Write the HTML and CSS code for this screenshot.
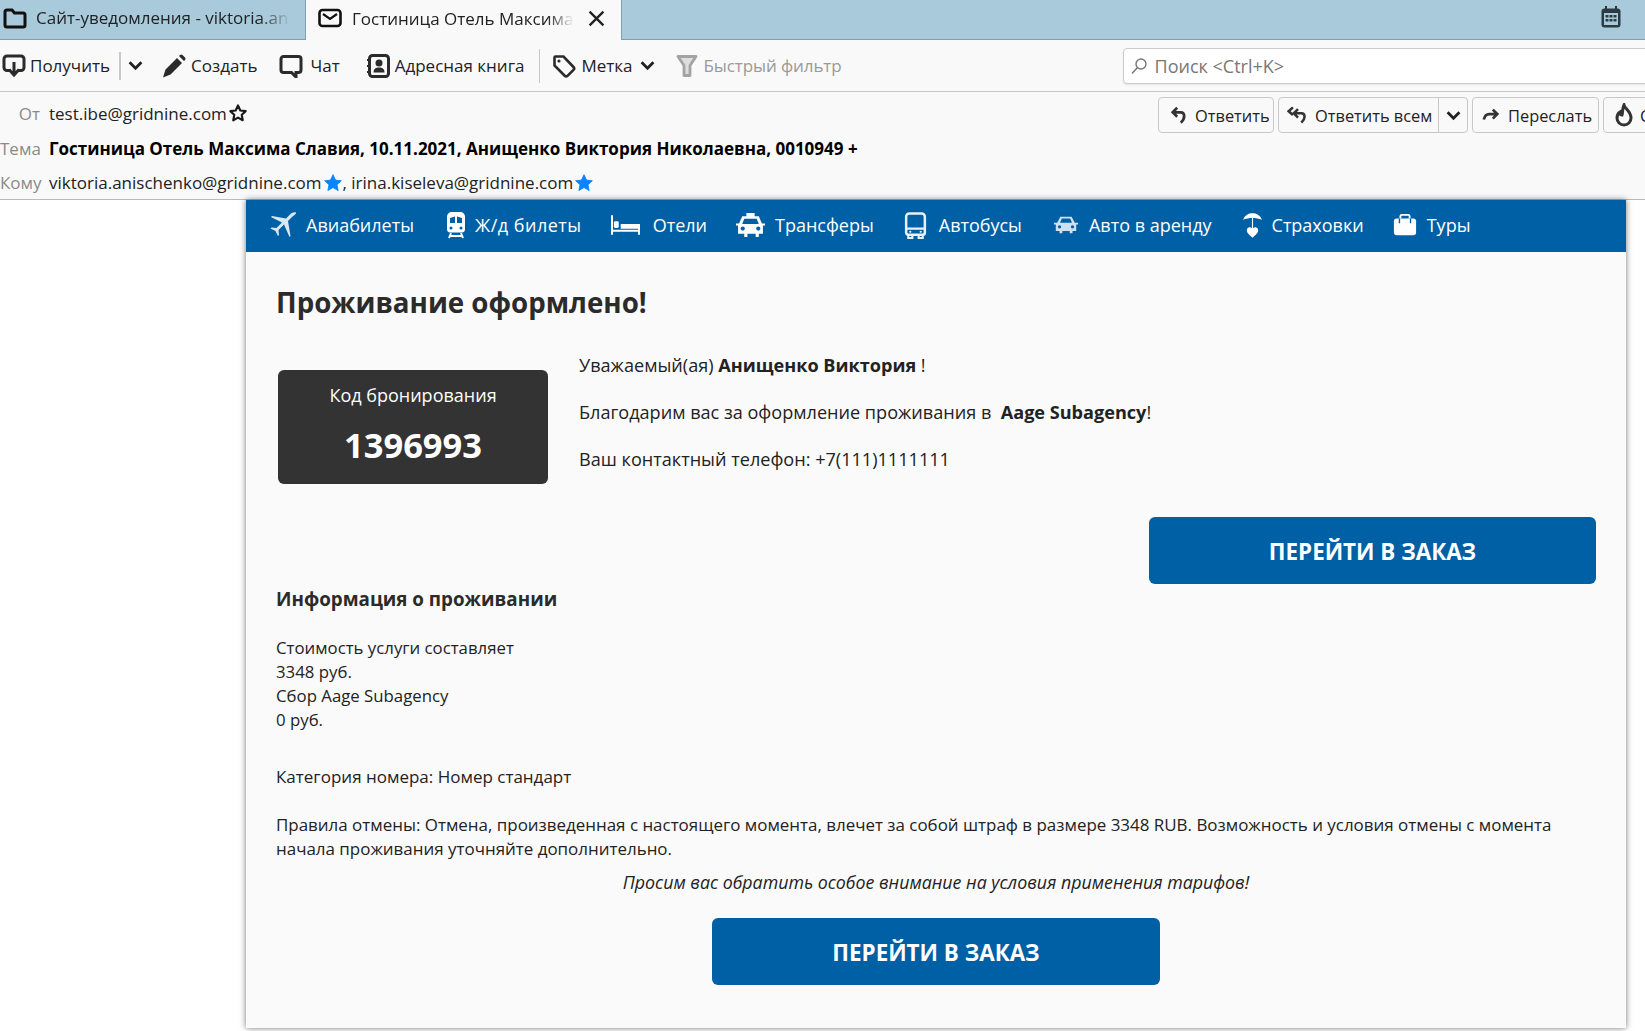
FILE: index.html
```html
<!DOCTYPE html>
<html lang="ru">
<head>
  <meta charset="UTF-8" />
  <title>Гостиница Отель Максима Славия</title>
  <link rel="stylesheet" href="styles.css">
</head>
<body>
  <div class="tabbar">
    <div class="tab">
      <svg class="tab-icon" viewBox="0 0 24 24"><path d="M2 6a2 2 0 0 1 2-2h5l2.500 3H20a2 2 0 0 1 2 2v10a2 2 0 0 1-2 2H4a2 2 0 0 1-2-2z" fill="none" stroke="#111" stroke-width="3"/></svg>
      <span class="tab-title fade">Сайт-уведомления - viktoria.anischenko</span>
    </div>
    <div class="tab current">
      <svg class="tab-icon" viewBox="0 0 24 24"><rect x="1.500" y="4" width="21" height="16" rx="3" fill="none" stroke="#111" stroke-width="2.600"/><path d="M5 8l7 5 7-5" fill="none" stroke="#111" stroke-width="2.200"/></svg>
      <span class="tab-title fade">Гостиница Отель Максима Славия</span>
      <svg class="tab-close" viewBox="0 0 16 16"><path d="M1.500 1.500l13 13M14.500 1.500l-13 13" stroke="#222" stroke-width="2.200"/></svg>
    </div>
    <svg class="calendar" viewBox="0 0 24 24"><path d="M7 1v4M17 1v4" stroke="#333" stroke-width="2"/><rect x="2.500" y="3.500" width="19" height="19" rx="3" fill="#2c3a42"/><rect x="5" y="8" width="14" height="12" fill="#a8cadb"/><path d="M6.500 10h3v2.500h-3zM10.500 10h3v2.500h-3zM14.500 10h3v2.500h-3zM6.500 14h3v2.500h-3zM10.500 14h3v2.500h-3zM14.500 14h3v2.500h-3z" fill="#2c3a42"/></svg>
  </div>

  <div class="toolbar">
    <button class="tool tool-get">
      <svg class="ico" viewBox="0 0 24 24"><path d="M8 16.500H5a3 3 0 0 1-3-3V5a3 3 0 0 1 3-3h14a3 3 0 0 1 3 3v8.500a3 3 0 0 1-3 3h-3" fill="none" stroke="#2b2b2b" stroke-width="3"/><path d="M12 8v12M7 15.500l5 5.500 5-5.500" fill="none" stroke="#2b2b2b" stroke-width="3"/></svg>
      Получить
    </button>
    <span class="tool-sep first"></span>
    <svg class="chevron" viewBox="0 0 14 14"><path d="M1.500 4l5.500 5.500L12.500 4" fill="none" stroke="#222" stroke-width="2.600"/></svg>
    <button class="tool tool-new">
      <svg class="ico" viewBox="0 0 24 24"><path d="M1 23.500l2.500-8L15 4l5 5L8.500 20.500z M17 2l1-1a2 2 0 0 1 2.500 0l2.500 2.500a2 2 0 0 1 0 2.500l-1 1z" fill="#2b2b2b"/></svg>
      Создать
    </button>
    <button class="tool tool-chat">
      <svg class="ico" viewBox="0 0 24 24"><path d="M4.500 2.500h15A2.500 2.500 0 0 1 22 5v11a2.500 2.500 0 0 1-2.500 2.500H17V23l-4.500-4.500h-8A2.500 2.500 0 0 1 2 16V5a2.500 2.500 0 0 1 2.500-2.500z" fill="none" stroke="#2b2b2b" stroke-width="3"/></svg>
      Чат
    </button>
    <button class="tool tool-book">
      <svg class="ico" viewBox="0 0 24 24"><rect x="3.500" y="1.500" width="19" height="21" rx="3" fill="none" stroke="#2b2b2b" stroke-width="3"/><path d="M1 6h4M1 12h4M1 18h4" stroke="#2b2b2b" stroke-width="2.200"/><circle cx="13" cy="9" r="3.500" fill="#2b2b2b"/><path d="M7.500 18.500c0-4 2.500-5 5.500-5s5.500 1 5.500 5z" fill="#2b2b2b"/></svg>
      Адресная книга
    </button>
    <span class="tool-sep"></span>
    <button class="tool tool-tag">
      <svg class="ico" viewBox="0 0 24 24"><path d="M2.500 3.500a1 1 0 0 1 1-1h8L21.500 13a2 2 0 0 1 0 2.800l-6 6a2 2 0 0 1-2.800 0L2.500 11.500z" fill="none" stroke="#2b2b2b" stroke-width="2.600"/><circle cx="7" cy="7" r="1.600" fill="#2b2b2b"/></svg>
      Метка
    </button>
    <svg class="chevron after-tag" viewBox="0 0 14 14"><path d="M1.500 4l5.500 5.500L12.500 4" fill="none" stroke="#222" stroke-width="2.600"/></svg>
    <button class="tool tool-filter">
      <svg class="ico" viewBox="0 0 24 24"><path d="M3 2.500h18l-6 9v10h-6v-10z" fill="#ddd" stroke="#a3a3a3" stroke-width="2.800" stroke-linejoin="round"/></svg>
      Быстрый фильтр
    </button>
    <div class="search">
      <svg class="search-ico" viewBox="0 0 18 18"><circle cx="11" cy="7" r="5" fill="none" stroke="#777" stroke-width="1.400"/><path d="M7.500 10.500L2 16.500" stroke="#777" stroke-width="1.400"/></svg>
      Поиск &lt;Ctrl+K&gt;
    </div>
  </div>

  <div class="msg-header">
    <div class="row row-from">
      <span class="label">От</span>
      <span class="addr">test.ibe@gridnine.com</span>
      <svg class="star" viewBox="0 0 24 24"><path d="M12 3l2.800 6 6.400.8-4.700 4.400 1.200 6.500-5.700-3.200-5.700 3.200 1.200-6.500L2.800 9.800 9.200 9z" fill="none" stroke="#1a1a1a" stroke-width="2.600" stroke-linejoin="round"/></svg>
      <div class="actions">
        <button class="act act-reply">
          <svg class="act-ico" viewBox="0 0 20 20"><path d="M8 2L3 7l5 5M3.500 7H12c4.500 0 5.500 6.500 0 11.500" fill="none" stroke="#333" stroke-width="3"/></svg>
          Ответить
        </button>
        <div class="act act-all">
          <span class="act-main">
            <svg class="act-ico wide" viewBox="0 0 26 20"><path d="M7 1L2 5.500 7 10M13 3L8 8l5 5M8.500 8H17c4.500 0 5.500 6 0 11" fill="none" stroke="#333" stroke-width="3"/></svg>
            Ответить всем
          </span>
          <span class="act-more"><svg class="chevron small" viewBox="0 0 14 14"><path d="M1.500 4l5.500 5.500L12.500 4" fill="none" stroke="#222" stroke-width="2.600"/></svg></span>
        </div>
        <button class="act act-fwd">
          <svg class="act-ico" viewBox="0 0 20 20"><path d="M12 4l5 5-5 5M16.500 9H8C5 9 3 11 2 15" fill="none" stroke="#333" stroke-width="3"/></svg>
          Переслать
        </button>
        <button class="act act-junk">
          <svg class="act-ico" viewBox="0 0 20 24"><path d="M10 2c1 4 7 6 7 13a7 7 0 0 1-14 0c0-3 1.500-5 3-6 0 2 1 3 2 3 1-3 0-6 2-10z" fill="none" stroke="#333" stroke-width="3"/></svg>
          Спам
        </button>
      </div>
    </div>
    <div class="row row-subject">
      <span class="label">Тема</span>
      <span class="subject">Гостиница Отель Максима Славия, 10.11.2021, Анищенко Виктория Николаевна, 0010949 +</span>
    </div>
    <div class="row row-to">
      <span class="label">Кому</span>
      <span class="addr">viktoria.anischenko@gridnine.com</span>
      <svg class="star" viewBox="0 0 24 24"><path d="M12 2l3 6.500 7 .8-5.200 4.800 1.400 7L12 17.500 5.800 21l1.400-7L2 9.300l7-.8z" fill="#0a84ff" stroke="#0a84ff" stroke-linejoin="round"/></svg>
      <span class="addr">, irina.kiseleva@gridnine.com</span>
      <svg class="star" viewBox="0 0 24 24"><path d="M12 2l3 6.500 7 .8-5.200 4.800 1.400 7L12 17.500 5.800 21l1.400-7L2 9.300l7-.8z" fill="#0a84ff" stroke="#0a84ff" stroke-linejoin="round"/></svg>
    </div>
  </div>

  <div class="msg-body">
    <div class="letter">
      <nav class="services">
        <a class="service s-avia">
          <svg class="svc-ico" viewBox="0 0 28 28"><path d="M27 1.500c-2-.5-4.500.5-6 2l-4 4L3 5 2 6l11 5.500-5.500 5.500-5-.5L1.500 17.500l5 2.500L9 25l1-1-.5-5 5.500-5.500L20.500 26l1-1L19 10l4-4c1.500-1.500 4.500-3 4-4.500z" fill="#d9e7f2"/></svg>
          Авиабилеты
        </a>
        <a class="service s-train">
          <svg class="svc-ico" viewBox="0 0 20 28"><path d="M6 1h8c3 0 5 2 5 5v12c0 2-1 3.500-3 3.500H4c-2 0-3-1.500-3-3.500V6c0-3 2-5 5-5z" fill="#fff"/><path d="M4 7l5-1.500V12H4zM16 7l-5-1.500V12h5z" fill="#0060a5"/><circle cx="5" cy="17" r="1.500" fill="#0060a5"/><circle cx="15" cy="17" r="1.500" fill="#0060a5"/><path d="M5 22l-2 5M15 22l2 5M4 25h12" stroke="#fff" stroke-width="2"/></svg>
          Ж/д билеты
        </a>
        <a class="service s-hotel">
          <svg class="svc-ico" viewBox="0 0 30 24"><path d="M1 2v20M29 11v11M1 18h28" stroke="#fff" stroke-width="2.200" fill="none"/><path d="M10 11h18a1 1 0 0 1 1 1v4H10z" fill="#fff"/><rect x="3" y="8" width="5" height="7" rx="1.500" fill="#fff"/></svg>
          Отели
        </a>
        <a class="service s-taxi">
          <svg class="svc-ico" viewBox="0 0 28 26"><path d="M10 1h8v3h-8zM6 4h16l3 7h3v2h-2v8h-4v3h-3v-3h-8v3H8v-3H2v-8H0v-2h3z" fill="#fff"/><path d="M8 6.500h12l2 5H6z" fill="#0060a5"/><circle cx="6.500" cy="16" r="2" fill="#0060a5"/><circle cx="21.500" cy="16" r="2" fill="#0060a5"/></svg>
          Трансферы
        </a>
        <a class="service s-bus">
          <svg class="svc-ico" viewBox="0 0 22 26"><path d="M5 1.500h12a3 3 0 0 1 3 3V20a2 2 0 0 1-2 2H4a2 2 0 0 1-2-2V4.500a3 3 0 0 1 3-3z" fill="none" stroke="#e8f1f8" stroke-width="2.400"/><path d="M2 16h18M4 22v3h4v-3M14 22v3h4v-3" stroke="#e8f1f8" stroke-width="2" fill="none"/><circle cx="6" cy="19" r="1" fill="#fff"/><circle cx="16" cy="19" r="1" fill="#fff"/></svg>
          Автобусы
        </a>
        <a class="service s-car">
          <svg class="svc-ico" viewBox="0 0 28 22"><path d="M8 2h12l3.500 6.500H27v2h-2v7h-4V20h-3v-2.500H10V20H7v-2.500H3v-7H1v-2h3.500z" fill="#cfe0ee"/><path d="M9.500 4h9l2 4.500h-13z" fill="#0060a5"/><circle cx="7" cy="13" r="1.800" fill="#0060a5"/><circle cx="21" cy="13" r="1.800" fill="#0060a5"/></svg>
          Авто в аренду
        </a>
        <a class="service s-ins">
          <svg class="svc-ico" viewBox="0 0 20 28"><path d="M0 8C2 3 6 1 10 1s8 2 10 7c-3-1.500-7-2-10-2S3 6.500 0 8z" fill="#fff"/><path d="M10 6v12" stroke="#fff" stroke-width="1.200"/><path d="M10 27c-3-3-6-5-6-8a3.200 3.200 0 0 1 6-1.500 3.200 3.200 0 0 1 6 1.500c0 3-3 5-6 8z" fill="#fff"/></svg>
          Страховки
        </a>
        <a class="service s-tours">
          <svg class="svc-ico" viewBox="0 0 26 24"><path d="M8 5V2.500A1.500 1.500 0 0 1 9.500 1h7A1.500 1.500 0 0 1 18 2.500V5" fill="none" stroke="#fff" stroke-width="2"/><rect x="1" y="5" width="24" height="18" rx="3" fill="#fff"/><path d="M7 5v5M19 5v5" stroke="#0060a5" stroke-width="1.500"/></svg>
          Туры
        </a>
      </nav>

      <div class="content">
        <h1 class="title">Проживание оформлено!</h1>
        <div class="summary">
          <div class="code-box">
            <div class="code-label">Код бронирования</div>
            <div class="code-value">1396993</div>
          </div>
          <div class="greeting">
            <p>Уважаемый(ая) <b>Анищенко Виктория</b> !</p>
            <p>Благодарим вас за оформление проживания в &nbsp;<b>Aage Subagency</b>!</p>
            <p>Ваш контактный телефон: +7(111)1111111</p>
          </div>
        </div>
        <div class="order-row">
          <a class="order-btn">ПЕРЕЙТИ В ЗАКАЗ</a>
        </div>
        <h2 class="section-title">Информация о проживании</h2>
        <div class="costs">
          Стоимость услуги составляет<br>
          3348 руб.<br>
          Сбор Aage Subagency<br>
          0 руб.
        </div>
        <p class="category">Категория номера: Номер стандарт</p>
        <p class="rules">Правила отмены: Отмена, произведенная с настоящего момента, влечет за собой штраф в размере 3348 RUB. Возможность и условия отмены с момента начала проживания уточняйте дополнительно.</p>
        <p class="notice">Просим вас обратить особое внимание на условия применения тарифов!</p>
        <div class="order-center">
          <a class="order-btn">ПЕРЕЙТИ В ЗАКАЗ</a>
        </div>
      </div>
    </div>
  </div>
</body>
</html>
```

FILE: styles.css
```css
* {
  box-sizing: border-box;
}
html, body {
  height: 1031px;
  overflow: hidden;
}
body {
  margin: 0;
  font-family: "Open Sans", "Noto Sans", sans-serif;
  font-size: 17px;
  color: #222;
  background: #fff;
  display: flex;
  flex-direction: column;
}
.tabbar {
  height: 40px;
  flex: none;
  display: flex;
  align-items: stretch;
  background: #a8cadb;
  border-bottom: 1px solid #7f9fb2;
}
.tab {
  width: 305px;
  display: flex;
  align-items: center;
  padding: 0 0 4px 3px;
  color: #222;
  font-size: 17px;
}
.tab.current {
  width: 317px;
  height: 40px;
  padding-left: 12px;
  background: #f9f9f9;
  border-left: 1px solid #7f9fb2;
  border-right: 1px solid #7f9fb2;
}
.tab-icon {
  width: 24px;
  height: 24px;
  flex: none;
  margin-right: 9px;
}
.tab-title {
  width: 254px;
  white-space: nowrap;
  overflow: hidden;
}
.tab.current .tab-title {
  width: 222px;
}
.current .tab-icon {
  margin-right: 10px;
}
.fade {
  -webkit-mask-image: linear-gradient(to right, #000 88%, transparent 100%);
  mask-image: linear-gradient(to right, #000 88%, transparent 100%);
}
.tab-close {
  width: 17px;
  height: 17px;
  margin-left: 14px;
}
.calendar {
  width: 24px;
  height: 24px;
  margin: 5px 22px 0 auto;
}
.toolbar {
  height: 52px;
  flex: none;
  display: flex;
  align-items: center;
  background: #f9f9f9;
  border-bottom: 1px solid #c8c8c8;
  padding-left: 2px;
  overflow: hidden;
}
.tool {
  display: flex;
  align-items: center;
  flex: none;
  gap: 5px;
  padding: 0;
  border: none;
  background: none;
  font: inherit;
  color: #222;
  white-space: nowrap;
}
.tool-get {
  gap: 4px;
}
.ico {
  width: 24px;
  height: 24px;
  flex: none;
}
.tool-sep {
  width: 1px;
  height: 34px;
  flex: none;
  background: #c8c8c8;
  margin: 0 12px 0 15px;
}
.tool-sep.first {
  width: 2px;
  height: 28px;
  margin: 0 7px 0 9px;
}
.chevron {
  width: 15px;
  height: 15px;
  flex: none;
  margin-right: 19px;
}
.chevron.after-tag {
  margin: 0 20px 0 7px;
}
.tool-chat {
  margin-left: 22px;
  gap: 7px;
}
.tool-book {
  margin-left: 26px;
}
.tool-filter {
  color: #9a9a9a;
  letter-spacing: -0.1px;
}
.search {
  width: 700px;
  height: 36px;
  flex: none;
  margin-left: 281px;
  display: flex;
  align-items: center;
  padding-left: 6px;
  gap: 7px;
  color: #777;
  font-size: 18px;
  background: #fff;
  border: 1px solid #ccc;
  border-radius: 4px;
  box-shadow: 0 1px 2px rgba(0,0,0,0.08);
}
.search-ico {
  width: 18px;
  height: 18px;
}
.msg-header {
  height: 108px;
  flex: none;
  background: #f9f9f9;
  border-bottom: 1px solid #b5bcc2;
  overflow: hidden;
}
.row {
  display: flex;
  align-items: center;
  white-space: nowrap;
}
.row-from {
  height: 42px;
}
.row-subject {
  height: 28px;
}
.row-to {
  height: 37px;
  padding-top: 4px;
}
.label {
  width: 40px;
  margin-right: 9px;
  text-align: right;
  color: #8a8a8a;
  flex: none;
}
.star {
  width: 20px;
  height: 20px;
  flex: none;
  margin-left: 1px;
}
.subject {
  font-weight: 700;
  color: #000;
}
.actions {
  display: flex;
  gap: 4px;
  width: 487px;
  flex: none;
  margin-left: auto;
  padding-top: 4px;
  overflow: hidden;
  font-size: 16.4px;
}
.act {
  display: flex;
  align-items: center;
  flex: none;
  height: 36px;
  padding: 0 0 0 11px;
  gap: 7px;
  font: inherit;
  color: #222;
  background: #f9f9f9;
  border: 1px solid #c8c8c8;
  border-radius: 4px;
}
.act-reply {
  width: 116px;
}
.act-all {
  width: 190px;
  padding: 0;
}
.act-fwd {
  width: 127px;
  padding-left: 9px;
  gap: 8px;
}
.act-junk {
  width: 100px;
  padding-left: 10px;
  gap: 6px;
}
.act-main {
  width: 160px;
  display: flex;
  align-items: center;
  gap: 6px;
  height: 100%;
  padding-left: 8px;
  border-right: 1px solid #c8c8c8;
}
.act-more {
  flex: 1;
  display: flex;
  justify-content: center;
  padding-right: 6px;
}
.chevron.small {
  margin: 0;
}
.act-ico {
  width: 18px;
  height: 20px;
  flex: none;
}
.act-ico.wide {
  width: 22px;
}
.act-junk .act-ico {
  width: 20px;
  height: 24px;
}
.msg-body {
  flex: 1;
  padding-left: 246px;
  padding-right: 19px;
  min-height: 0;
}
.letter {
  height: 828px;
  background: #fafafa;
  box-shadow: 0 0 6px rgba(0,0,0,0.55);
}
.services {
  height: 52px;
  display: flex;
  align-items: center;
  padding: 0 0 2px 23px;
  background: #0060a5;
}
.service {
  display: flex;
  align-items: center;
  gap: 9px;
  margin-right: 31px;
  color: #fff;
  font-size: 18px;
  white-space: nowrap;
}
.svc-ico {
  height: 28px;
  width: 26px;
  flex: none;
}
.s-avia .svc-ico {
  width: 28px;
}
.s-avia {
  margin-right: 32px;
}
.s-train {
  gap: 9px;
  margin-right: 29px;
  letter-spacing: 0.5px;
}
.s-train .svc-ico {
  width: 20px;
}
.s-hotel {
  gap: 13px;
  margin-right: 29px;
}
.s-hotel .svc-ico {
  width: 29px;
}
.s-taxi {
  gap: 10px;
  margin-right: 30px;
}
.s-taxi .svc-ico {
  width: 29px;
  height: 27px;
}
.s-bus {
  gap: 12px;
}
.s-bus .svc-ico {
  width: 23px;
  height: 27px;
}
.s-car {
  gap: 10px;
}
.s-ins {
  gap: 10px;
  margin-right: 29px;
}
.s-ins .svc-ico {
  width: 19px;
  height: 27px;
}
.s-tours {
  gap: 10px;
}
.s-tours .svc-ico {
  width: 24px;
}
.content {
  padding: 0 30px;
}
.title {
  margin: 0;
  padding-top: 30px;
  font-size: 27.7px;
  line-height: 40px;
  font-weight: 700;
  color: #2b2b2b;
}
.summary {
  display: flex;
  align-items: flex-start;
  margin-top: 31px;
}
.code-box {
  width: 270px;
  height: 114px;
  margin: 17px 0 0 2px;
  background: #333;
  color: #fff;
  border-radius: 6px;
  text-align: center;
  padding-top: 13px;
}
.code-label {
  font-size: 18px;
}
.code-value {
  margin-top: 16px;
  font-size: 34.5px;
  line-height: 44px;
  font-weight: 700;
}
.greeting {
  margin: 1px 0 0 31px;
  font-size: 18.1px;
}
.greeting p {
  margin: 0 0 24px;
  line-height: 23px;
}
.greeting p:last-child {
  margin-bottom: 0;
}
.order-row {
  display: flex;
  justify-content: flex-end;
  margin-top: 33px;
}
.order-center {
  display: flex;
  justify-content: center;
  margin-top: 24px;
}
.order-btn {
  width: 447px;
  height: 67px;
  display: flex;
  align-items: center;
  justify-content: center;
  padding-top: 2px;
  background: #0060a5;
  color: #fff;
  border-radius: 6px;
  font-size: 22.4px;
  font-weight: 700;
}
.order-center .order-btn {
  width: 448px;
}
.section-title {
  margin: 0;
  font-size: 18.8px;
  line-height: 30px;
  font-weight: 700;
  color: #2b2b2b;
}
.costs {
  margin-top: 22px;
  line-height: 24px;
  font-size: 16.8px;
}
.category {
  margin: 33px 0 0;
  line-height: 24px;
}
.rules {
  margin: 24px 0 0;
  line-height: 24px;
  font-size: 16.95px;
}
.notice {
  margin: 9px 0 0;
  line-height: 24px;
  text-align: center;
  font-style: italic;
  font-size: 17.8px;
}
```
